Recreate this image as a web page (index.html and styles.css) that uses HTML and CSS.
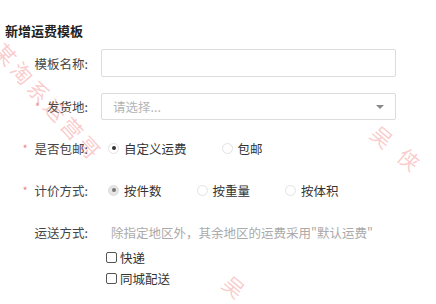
FILE: index.html
```html
<!DOCTYPE html>
<html lang="zh-CN">
<head>
    <meta charset="UTF-8">
    <meta name="viewport" content="width=device-width, initial-scale=1">
    <title>新增运费模板</title>
    <link rel="stylesheet" href="styles.css">
</head>

<body>
    <div class="panel">
        <h2 class="title">新增运费模板</h2>

        <div class="row">
            <label class="label">模板名称:</label>
            <input class="input" type="text">
        </div>

        <div class="row row-select">
            <label class="label"><span class="req">*</span>发货地:</label>
            <div class="select">
                <span class="placeholder">请选择...</span>
                <span class="arrow"></span>
            </div>
        </div>

        <div class="row row-radio">
            <label class="label"><span class="req">*</span>是否包邮:</label>
            <div class="radios">
                <span class="radio-item"><i class="radio checked"></i>自定义运费</span>
                <span class="radio-item"><i class="radio"></i>包邮</span>
            </div>
        </div>

        <div class="row row-radio">
            <label class="label"><span class="req">*</span>计价方式:</label>
            <div class="radios">
                <span class="radio-item"><i class="radio checked-grey"></i>按件数</span>
                <span class="radio-item"><i class="radio"></i>按重量</span>
                <span class="radio-item"><i class="radio"></i>按体积</span>
            </div>
        </div>

        <div class="row row-ship">
            <label class="label">运送方式:</label>
            <div class="ship">
                <div class="hint">除指定地区外，其余地区的运费采用"默认运费"</div>
                <div class="check-item"><i class="checkbox"></i>快递</div>
                <div class="check-item"><i class="checkbox"></i>同城配送</div>
            </div>
        </div>
    </div>

    <!-- watermark -->
    <span class="wm wm-left">某淘系运营哥</span>
    <span class="wm wm-right">吴侠</span>
    <span class="wm wm-bottom">吴</span>
</body>
</html>
```

FILE: styles.css
```css
body {
    margin: 0;
    padding: 0;
    background: #fff;
    font-family: "Noto Sans CJK SC", "Noto Sans", sans-serif;
    font-size: 12.5px;
    color: #333;
    overflow: hidden;
}

.panel {
    padding: 22px 0 0 5px;
}

.title {
    margin: 0 0 9px 0;
    font-size: 13px;
    line-height: 18px;
    font-weight: bold;
    color: #222;
}

.row {
    display: flex;
    align-items: center;
    height: 28px;
}

.row-select {
    margin-top: 16px;
    height: 27px;
}

.row-radio {
    margin-top: 14px;
}

.label {
    width: 83px;
    flex-shrink: 0;
    text-align: right;
    margin-right: 13px;
    color: #444;
}

.req {
    color: #e4393c;
    margin-right: 7px;
    font-size: 11px;
    vertical-align: 1px;
    opacity: 0.6;
}

.input {
    width: 295px;
    height: 28px;
    box-sizing: border-box;
    border: 1px solid #dcdcdc;
    border-radius: 2px;
    outline: none;
    margin: 0;
}

.select {
    width: 295px;
    height: 27px;
    box-sizing: border-box;
    border: 1px solid #dcdcdc;
    border-radius: 2px;
    display: flex;
    align-items: center;
    justify-content: space-between;
    padding: 0 11px 0 11px;
}

.placeholder {
    color: #b5b5b5;
}

.arrow {
    width: 0;
    height: 0;
    border-left: 4.5px solid transparent;
    border-right: 4.5px solid transparent;
    border-top: 4px solid #8a8a8a;
}

.radios {
    display: flex;
    align-items: center;
    padding-left: 7px;
}

.radio-item {
    display: flex;
    align-items: center;
    margin-right: 35px;
    color: #333;
}

.radio {
    display: inline-block;
    width: 11px;
    height: 11px;
    box-sizing: border-box;
    border: 1px solid #e2e2e2;
    border-radius: 50%;
    margin-right: 5px;
    position: relative;
}

.radio.checked::after,
.radio.checked-grey::after {
    content: "";
    position: absolute;
    left: 2.5px;
    top: 2.5px;
    width: 4px;
    height: 4px;
    border-radius: 50%;
    background: #333;
}

.radio.checked-grey {
    background: #e6e6e6;
    border-color: #dcdcdc;
}

.radio.checked-grey::after {
    background: #777;
}

.row-ship {
    margin-top: 15px;
    align-items: flex-start;
    height: auto;
}

.row-ship .label {
    line-height: 20px;
    height: 20px;
    margin-top: 4px;
}

.ship {
    padding-top: 4px;
}

.hint {
    line-height: 20px;
    padding-left: 10px;
    color: #aaa;
    margin-bottom: 4px;
}

.check-item {
    display: flex;
    align-items: center;
    height: 21px;
    padding-left: 5px;
    color: #333;
}

.checkbox {
    display: inline-block;
    width: 11px;
    height: 11px;
    box-sizing: border-box;
    border: 1px solid #555;
    border-radius: 2px;
    margin-right: 3px;
}

.wm {
    position: absolute;
    font-size: 21px;
    letter-spacing: 4px;
    color: rgba(235, 80, 80, 0.3);
    white-space: nowrap;
    transform-origin: 0 0;
    pointer-events: none;
}

.wm-left {
    left: 10px;
    top: 36px;
    transform: rotate(48deg);
}

.wm-right {
    left: 384px;
    top: 118px;
    transform: rotate(40deg);
    letter-spacing: 14px;
}

.wm-bottom {
    left: 236px;
    top: 268px;
    transform: rotate(40deg);
}
```
